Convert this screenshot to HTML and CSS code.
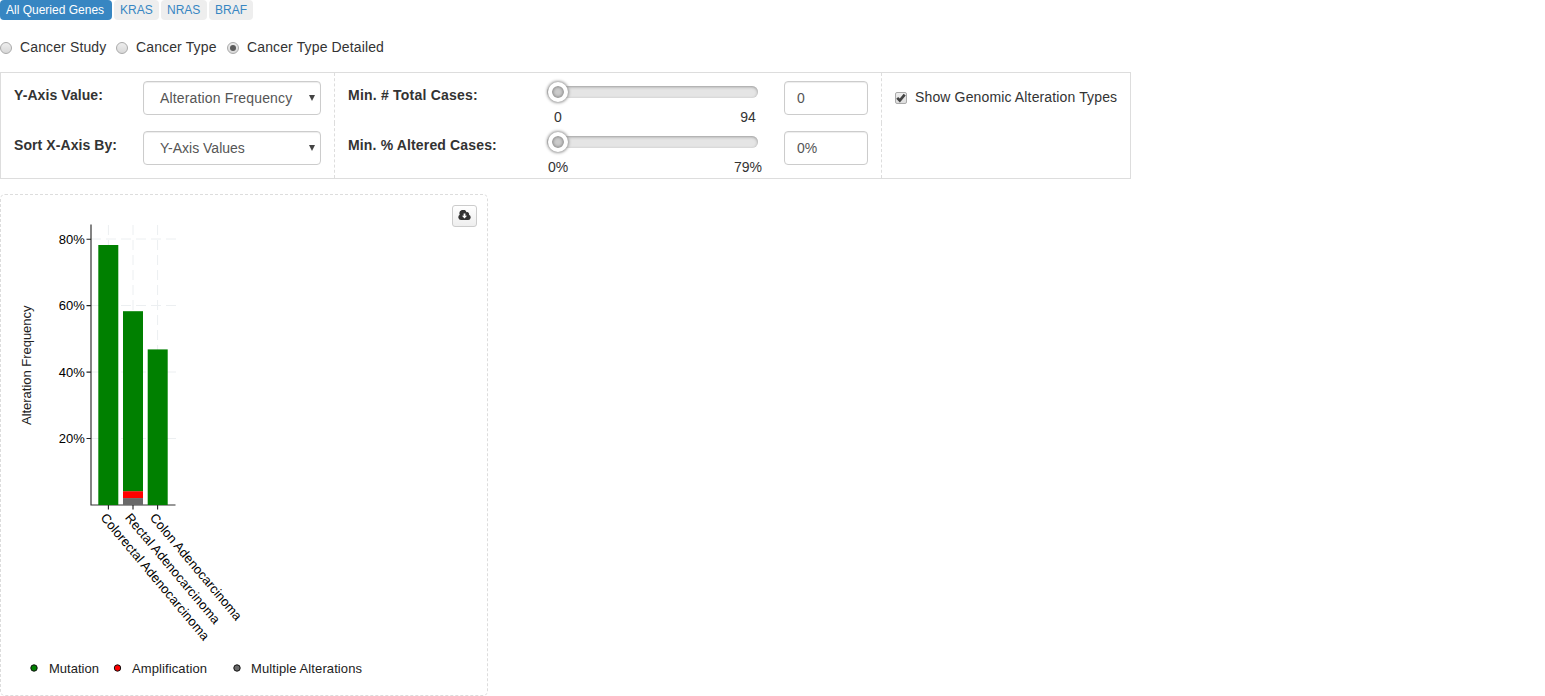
FILE: index.html
```html
<!DOCTYPE html>
<html lang="en">
<head>
<meta charset="utf-8">
<title>Cancer Types Summary</title>
<link rel="stylesheet" href="styles.css">
</head>
<body>
<nav class="pills">
  <a class="pill active w1">All Queried Genes</a><a class="pill w2">KRAS</a><a class="pill w3">NRAS</a><a class="pill w4">BRAF</a>
</nav>
<div class="radios">
  <label class="radio r1"><i class="dot"></i>Cancer Study</label>
  <label class="radio r2"><i class="dot"></i>Cancer Type</label>
  <label class="radio r3"><i class="dot on"></i><span>Cancer Type Detailed</span></label>
</div>
<section class="controls">
  <div class="cell axis"><b class="yaxis">Y-Axis Value:</b><div class="select"><span class="frequency">Alteration Frequency</span><i class="arrow"></i></div></div>
  <div class="cell range">
    <b class="total">Min. # Total Cases:</b>
    <div class="slider"><div class="track"><i class="handle"></i></div><div class="ticks"><span>0</span><span>94</span></div></div>
    <div class="field">0</div>
  </div>
  <div class="cell show"><i class="check"><svg width="12" height="12" viewBox="0 0 12 12"><path d="M2.2 5.9 L4.8 8.5 L9.7 2.6" fill="none" stroke="#444" stroke-width="2.7"/></svg></i><span class="types">Show Genomic Alteration Types</span></div>
  <div class="cell axis"><b class="yaxis">Sort X-Axis By:</b><div class="select"><span>Y-Axis Values</span><i class="arrow"></i></div></div>
  <div class="cell range">
    <b class="altered">Min. % Altered Cases:</b>
    <div class="slider"><div class="track"><i class="handle"></i></div><div class="ticks"><span>0%</span><span>79%</span></div></div>
    <div class="field">0%</div>
  </div>
  <div class="cell show"></div>
</section>
<section class="plot">
  <button class="download" aria-label="Download"><svg width="13" height="11" viewBox="0 0 13 11"><path d="M3 10 A2.8 2.8 0 0 1 1.7 4.8 A3.6 3.6 0 0 1 8.5 2.2 A2 2 0 0 1 11 4.8 A2.7 2.7 0 0 1 10.2 10 Z" fill="#333"/><path d="M5.6 3.4 H7.4 V5.8 H9.1 L6.5 8.5 L3.9 5.8 H5.6 Z" fill="#fff"/></svg></button>
  <svg class="chart" width="486" height="500" viewBox="1 195 486 500">
    <g class="grid">
      <path d="M91 239H176M91 305.5H176M91 372H176M91 438.5H176"/>
      <path d="M108.4 505V224M133 505V224M157.6 505V224"/>
    </g>
    <g class="axes"><path class="line" d="M91 224.5V505H175.5"/><path d="M86.5 239.2H91M86.5 305.6H91M86.5 372.1H91M86.5 438.5H91M108.4 505V509.5M133 505V509.5M157.6 505V509.5"/></g>
    <g fill="green">
      <rect x="98.3" y="245" width="20" height="260"/>
      <rect x="123" y="311.2" width="20" height="180.3"/>
      <rect x="147.7" y="349.4" width="20" height="155.6"/>
    </g>
    <rect x="123" y="491.3" width="20" height="7" fill="red"/>
    <rect x="123" y="498.1" width="20" height="6.9" fill="#696969"/>
    <g class="label" text-anchor="end">
      <text x="84.8" y="244">80%</text><text x="84.8" y="310">60%</text><text x="84.8" y="377">40%</text><text x="84.8" y="443">20%</text>
    </g>
    <g class="label">
      <text transform="translate(99.9 518) rotate(50)" textLength="161">Colorectal Adenocarcinoma</text>
      <text transform="translate(124.5 518) rotate(50)" textLength="139.5">Rectal Adenocarcinoma</text>
      <text transform="translate(149.2 518) rotate(50)" textLength="135">Colon Adenocarcinoma</text>
    </g>
    <g class="legend">
      <text transform="translate(31 425) rotate(-90)" textLength="119.5">Alteration Frequency</text>
      <text x="49" y="673" textLength="50">Mutation</text>
      <text x="132" y="673" textLength="75">Amplification</text>
      <text x="251" y="673" textLength="111">Multiple Alterations</text>
    </g>
    <g stroke="#111" stroke-width="1"><circle cx="34" cy="668" r="3.2" fill="green"/><circle cx="117.5" cy="668" r="3.2" fill="red"/><circle cx="237" cy="668" r="3.2" fill="#696969"/></g>
  </svg>
</section>
</body>
</html>
```
FILE: styles.css
```css
* { box-sizing: border-box; }
body { margin: 0; height: 696px; overflow: hidden; background: #fff; color: #333; font: 14px/20px "Liberation Sans", Arial, sans-serif; }
.pills { display: flex; gap: 2px; height: 20px; }
.pill { height: 20px; border-radius: 4px; background: #eee; color: #3786c2; font-size: 12px; line-height: 20px; padding-left: 6px; white-space: nowrap; }
.pill.active { background: #3786c2; color: #fff; }
.w1 { width: 112px; }
.w2 { width: 45px; }
.w3 { width: 46px; }
.w4 { width: 44px; }
.radios { display: flex; margin-top: 17px; height: 20px; letter-spacing: .13px; }
.radio { display: flex; align-items: center; gap: 8px; white-space: nowrap; }
.r1 { width: 116px; }
.r2 { width: 111px; }
.dot { width: 12px; height: 12px; margin-top: 2px; border: 1px solid #aaa; border-radius: 50%; background: linear-gradient(#eee, #d8d8d8); display: flex; align-items: center; justify-content: center; }
.dot.on::after { content: ""; width: 6px; height: 6px; border-radius: 50%; background: #5c5c5c; }
.controls { display: grid; grid-template-columns: 334px 547px 248px; grid-template-rows: 50px 55px; width: 1131px; height: 107px; margin-top: 15px; border: 1px solid #ddd; }
.cell { display: flex; align-items: flex-start; padding: 8px 13px 0; white-space: nowrap; }
.cell + .show { padding-top: 14px; }
.axis, .range { border-right: 1px dashed #ddd; }
.cell b { margin-top: 4px; }
.axis b { width: 129px; }
.range b { width: 199px; }
.yaxis { letter-spacing: .08px; }
.total { letter-spacing: .22px; }
.altered { letter-spacing: .15px; }
.frequency { letter-spacing: .16px; }
.types { letter-spacing: .14px; }
.select { display: flex; justify-content: space-between; align-items: center; width: 178px; height: 34px; padding: 0 5px 0 16px; border: 1px solid #ccc; border-radius: 4px; box-shadow: inset 0 1px 1px rgba(0,0,0,.075); color: #555; }
.arrow { width: 6px; height: 6px; background: #444; clip-path: polygon(0 0, 100% 0, 50% 100%); }
.slider { width: 211px; margin-top: 5px; }
.track { height: 12px; border-radius: 6px; background: #e5e5e5; box-shadow: inset 0 1px 3px #999; }
.handle { display: block; position: relative; left: 1px; top: -4px; width: 20px; height: 20px; border: 4px solid #fff; border-radius: 50%; background: #ccc; box-shadow: 0 0 3px 1px #999, inset 0 0 3px 1px #888; }
.ticks { display: flex; justify-content: space-between; margin-top: 9px; line-height: 20px; }
.ticks span { width: 20px; display: flex; justify-content: center; }
.ticks span:first-child { margin-left: 1px; }
.field { width: 84px; height: 34px; margin-left: 26px; padding: 6px 12px; border: 1px solid #ccc; border-radius: 4px; box-shadow: inset 0 1px 1px rgba(0,0,0,.075); color: #555; }
.check { display: flex; width: 12px; height: 12px; margin: 5px 8px 0 0; border: 1px solid #aaa; border-radius: 2px; background: linear-gradient(#eee, #ddd); align-items: center; justify-content: center; }
.check svg { flex: none; }
.plot { position: relative; width: 488px; height: 502px; margin-top: 15px; border: 1px dashed #ddd; border-radius: 5px; }
.chart { display: block; }
.download { position: absolute; right: 10px; top: 10px; width: 25px; height: 22px; padding: 0 0 1px; border: 1px solid #ccc; border-radius: 3px; background: linear-gradient(#fff, #eee); display: flex; align-items: center; justify-content: center; }
.grid path { fill: none; stroke: #eceff1; stroke-width: 1; stroke-dasharray: 10 5; }
.axes path { fill: none; stroke: #222; stroke-width: 1.1; }
.axes .line { stroke: #333; stroke-width: 1.2; }
.label, .legend { font-size: 13px; fill: #000; }
.legend { fill: #222; }
```
